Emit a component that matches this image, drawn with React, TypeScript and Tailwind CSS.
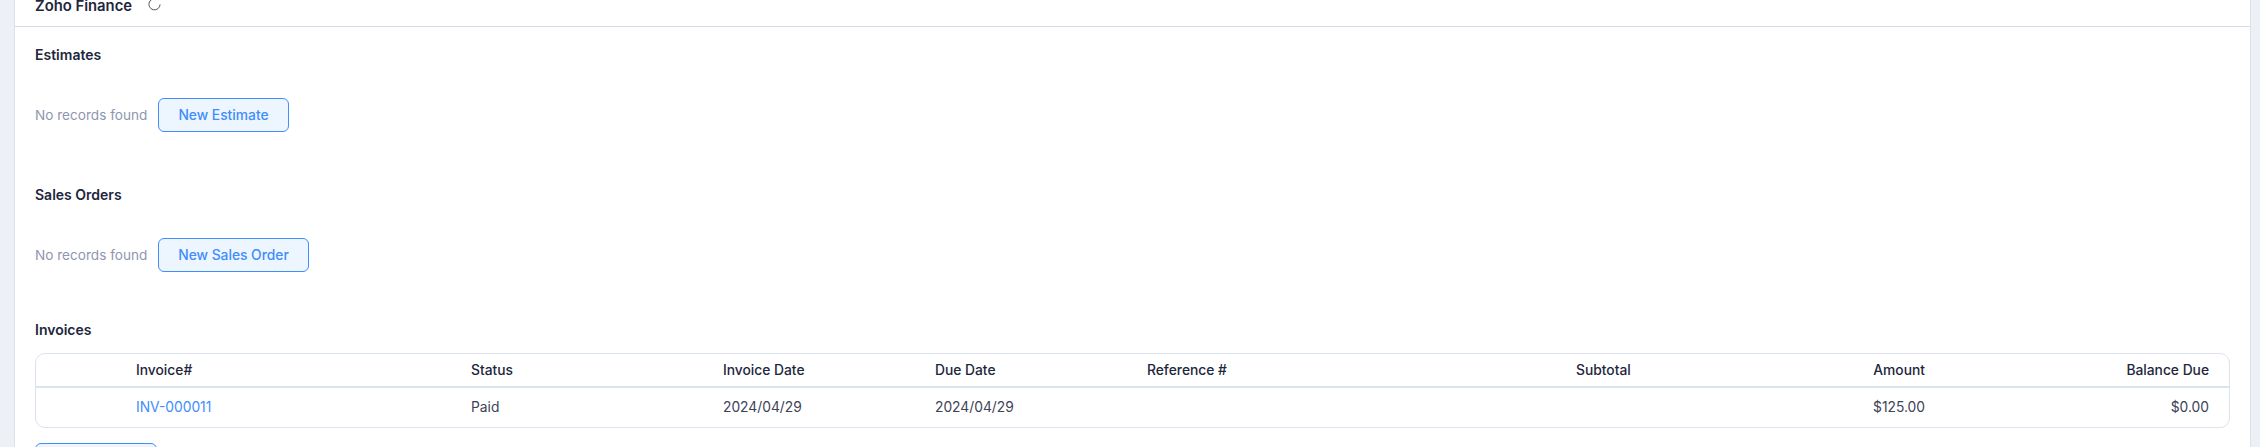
import React from 'react'

const Section: React.FC<{ title: string; action: string; width: string }> = ({ title, action, width }) => (
  <section className="h-[140px] pt-[19px]">
    <h3 className="text-[14px] leading-[18px] font-semibold text-[#21263c]">{title}</h3>
    <div className="mt-[34px] flex items-center gap-[11px]">
      <span className="w-[112px] text-[13.6px] leading-[34px] whitespace-nowrap text-[#8f96ae]">No records found</span>
      <button className={`h-[34px] ${width} rounded-[6px] border border-[#408dfb] bg-[#edf5ff] text-[13.8px] font-medium text-[#408dfb]`}>
        {action}
      </button>
    </div>
  </section>
)

const columns = 'grid-cols-[100px_335px_252px_212px_212px_429px_150px_199px_1fr]'
const headCell = 'text-[13.8px] font-medium text-[#21263c]'
const bodyCell = 'text-[13.8px] text-[#3c4257]'

export default function App() {
  return (
    <div className="h-screen overflow-hidden bg-[#edf0f5] pl-[14px] pr-[9px] font-['Inter',sans-serif]">
      <div className="h-full border-x border-[#d9e2ed] bg-white">
        {/* header */}
        <div className="flex h-[27px] items-start gap-[16px] border-b border-[#d4dbe7] pl-[20px]">
          <span className="-mt-[3px] text-[14.8px] leading-[18px] font-semibold text-[#21263c]">Zoho Finance</span>
          <svg className="-mt-[2px] h-[13px] w-[13px] text-[#555]" viewBox="0 0 13 13" fill="none" stroke="currentColor" strokeWidth="1">
            <path d="M9.6 1.6A5.6 5.6 0 1 0 12.1 6.5" />
          </svg>
        </div>

        <div className="px-[20px]">
          <Section title="Estimates" action="New Estimate" width="w-[131px]" />
          <Section title="Sales Orders" action="New Sales Order" width="w-[151px]" />

          <h3 className="mt-[14px] text-[14px] leading-[18px] font-semibold text-[#21263c]">Invoices</h3>
          <div className="mt-[14px] rounded-[10px] border border-[#dbe3ee]">
            <div className={`grid h-[34px] ${columns} items-center border-b-2 border-[#dbe3ee] pr-[20px]`}>
              <span />
              <span className={headCell}>Invoice#</span>
              <span className={headCell}>Status</span>
              <span className={headCell}>Invoice Date</span>
              <span className={headCell}>Due Date</span>
              <span className={headCell}>Reference #</span>
              <span className={headCell}>Subtotal</span>
              <span className={`${headCell} text-right`}>Amount</span>
              <span className={`${headCell} text-right`}>Balance Due</span>
            </div>
            <div className={`grid h-[39px] ${columns} items-center pr-[20px]`}>
              <span />
              <a className="text-[13.8px] text-[#408dfb]">INV-000011</a>
              <span className={bodyCell}>Paid</span>
              <span className={bodyCell}>2024/04/29</span>
              <span className={bodyCell}>2024/04/29</span>
              <span />
              <span />
              <span className={`${bodyCell} text-right`}>$125.00</span>
              <span className={`${bodyCell} text-right`}>$0.00</span>
            </div>
          </div>
          <button className="mt-[15px] h-[34px] w-[122px] rounded-[6px] border border-[#408dfb] bg-[#edf5ff] text-[13.8px] font-medium text-[#408dfb]">
            New Invoice
          </button>
        </div>
      </div>
    </div>
  )
}
